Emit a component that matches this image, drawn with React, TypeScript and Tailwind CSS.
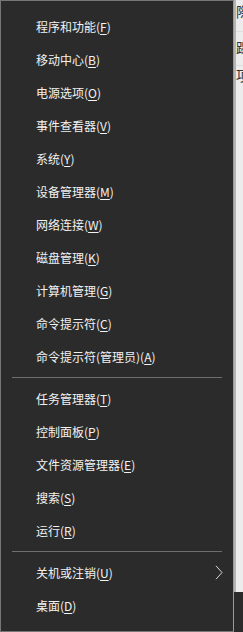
import React from "react";

type Item = { label: string; key: string; tail?: string; sub?: boolean };

const group1: Item[] = [
  { label: "程序和功能(", key: "F", tail: ")" },
  { label: "移动中心(", key: "B", tail: ")" },
  { label: "电源选项(", key: "O", tail: ")" },
  { label: "事件查看器(", key: "V", tail: ")" },
  { label: "系统(", key: "Y", tail: ")" },
  { label: "设备管理器(", key: "M", tail: ")" },
  { label: "网络连接(", key: "W", tail: ")" },
  { label: "磁盘管理(", key: "K", tail: ")" },
  { label: "计算机管理(", key: "G", tail: ")" },
  { label: "命令提示符(", key: "C", tail: ")" },
  { label: "命令提示符(管理员)(", key: "A", tail: ")" },
];
const group2: Item[] = [
  { label: "任务管理器(", key: "T", tail: ")" },
  { label: "控制面板(", key: "P", tail: ")" },
  { label: "文件资源管理器(", key: "E", tail: ")" },
  { label: "搜索(", key: "S", tail: ")" },
  { label: "运行(", key: "R", tail: ")" },
];
const group3: Item[] = [
  { label: "关机或注销(", key: "U", tail: ")", sub: true },
  { label: "桌面(", key: "D", tail: ")" },
];

function Row({ item }: { item: Item }) {
  return (
    <div className="h-[33px] flex items-center justify-between pl-[35px] pr-[10px] text-[12px] text-[#f2f2f2] leading-none">
      <span>
        {item.label}
        <span className="underline underline-offset-2">{item.key}</span>
        {item.tail}
      </span>
      {item.sub && (
        <svg width="8" height="15" viewBox="0 0 8 15" className="mr-0">
          <path d="M1 0.8 L7 7.5 L1 14.2" fill="none" stroke="#d8d8d8" strokeWidth="1" />
        </svg>
      )}
    </div>
  );
}

function Sep() {
  return (
    <div className="h-[9px] flex items-center px-[11px]">
      <div className="h-px w-full bg-[#6e6e6e]" />
    </div>
  );
}

export default function App() {
  return (
    <div
      className="w-[243px] h-[632px] flex overflow-hidden bg-[#2b2b2b]"
      style={{ fontFamily: '"Noto Sans CJK SC", "Noto Sans", sans-serif' }}
    >
      <div className="w-[234px] h-[632px] shrink-0 bg-[#2b2b2b] border border-[#767676] border-r-[#9a9a9a] pt-[9px] flex flex-col">
        {group1.map((it) => (
          <Row key={it.label} item={it} />
        ))}
        <Sep />
        {group2.map((it) => (
          <Row key={it.label} item={it} />
        ))}
        <Sep />
        {group3.map((it) => (
          <Row key={it.label} item={it} />
        ))}
      </div>
      <div className="flex-1 flex flex-col overflow-hidden">
        <div className="h-[592px] flex bg-[#ececec]">
          <div className="w-[2px] bg-[#b4b4b4]" />
          <div className="flex-1 flex flex-col overflow-hidden text-[14px] text-[#333] leading-none whitespace-nowrap">
            <div className="h-[32px] flex items-start pt-[4px] border-b border-[#dedede]">際</div>
            <div className="h-[34px] flex items-start pt-[8px] border-b border-[#dedede]">踢</div>
            <div className="h-[34px] flex items-start pt-[2px]">项</div>
          </div>
        </div>
        <div className="flex-1 bg-[#2b2b2b]" />
      </div>
    </div>
  );
}
